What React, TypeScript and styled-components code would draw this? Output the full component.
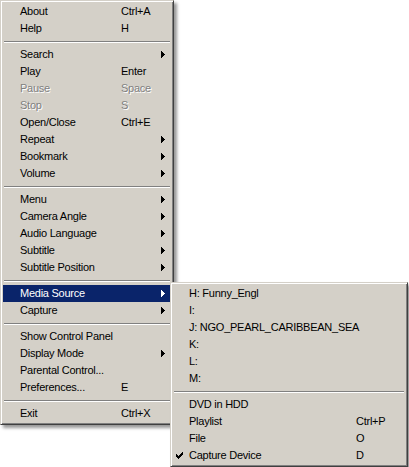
import React from 'react';
import styled, { createGlobalStyle } from 'styled-components';

const Global = createGlobalStyle`
  html, body { margin: 0; padding: 0; background: #fff; }
  body { font-family: "Liberation Sans", Arial, sans-serif; font-size: 11px; }
`;

const Stage = styled.div`
  position: relative;
  width: 409px;
  height: 467px;
  overflow: hidden;
  background: #fff;
`;

const MenuPanel = styled.div<{ $width: number }>`
  box-sizing: border-box;
  width: ${(p) => p.$width}px;
  background: #d4d0c8;
  border: 1px solid;
  border-color: #d4d0c8 #404040 #404040 #d4d0c8;
  padding: 2px;
  color: #000;
  text-shadow: none;
  box-shadow: inset 1px 1px #fff, inset -1px -1px #808080, 3px 3px 3px rgba(0, 0, 0, 0.4);
`;

const SubPanel = styled(MenuPanel)`
  position: absolute;
  left: 167px;
  top: -3px;
  z-index: 2;
`;

const Row = styled.div<{ $cols: string; $hl?: boolean; $disabled?: boolean }>`
  position: relative;
  display: grid;
  grid-template-columns: ${(p) => p.$cols};
  height: 17px;
  line-height: 17px;
  white-space: nowrap;
  letter-spacing: -0.25px;
  background: ${(p) => (p.$hl ? '#0a246a' : 'transparent')};
  color: ${(p) => (p.$hl ? '#fff' : p.$disabled ? '#808080' : '#000')};
  text-shadow: ${(p) => (p.$disabled ? '1px 1px #fff' : 'none')};
`;

const Gutter = styled.span`
  display: flex;
  align-items: center;
  padding-left: 3px;
`;

const Label = styled.span`
  overflow: visible;
`;

const Shortcut = styled.span``;

const ArrowCell = styled.span`
  display: flex;
  align-items: center;
`;

const Separator = styled.div`
  height: 9px;
  display: flex;
  flex-direction: column;
  justify-content: center;
  padding: 0 1px;
  &::before {
    content: '';
    display: block;
    height: 1px;
    background: #808080;
  }
  &::after {
    content: '';
    display: block;
    height: 1px;
    background: #fff;
  }
`;

const Arrow = ({ color }: { color: string }) => (
  <svg width="4" height="7" viewBox="0 0 4 7" shapeRendering="crispEdges">
    <rect x="0" y="0" width="1" height="7" fill={color} />
    <rect x="1" y="1" width="1" height="5" fill={color} />
    <rect x="2" y="2" width="1" height="3" fill={color} />
    <rect x="3" y="3" width="1" height="1" fill={color} />
  </svg>
);

const Check = () => (
  <svg width="7" height="7" viewBox="0 0 7 7" shapeRendering="crispEdges">
    {[2, 3, 4, 3, 2, 1, 0].map((y, x) => (
      <rect key={x} x={x} y={y} width="1" height="3" fill="#000" />
    ))}
  </svg>
);

type Item =
  | { sep: true }
  | { label: string; shortcut?: string; sub?: boolean; disabled?: boolean; hl?: boolean; checked?: boolean };

const mainItems: Item[] = [
  { label: 'About', shortcut: 'Ctrl+A' },
  { label: 'Help', shortcut: 'H' },
  { sep: true },
  { label: 'Search', sub: true },
  { label: 'Play', shortcut: 'Enter' },
  { label: 'Pause', shortcut: 'Space', disabled: true },
  { label: 'Stop', shortcut: 'S', disabled: true },
  { label: 'Open/Close', shortcut: 'Ctrl+E' },
  { label: 'Repeat', sub: true },
  { label: 'Bookmark', sub: true },
  { label: 'Volume', sub: true },
  { sep: true },
  { label: 'Menu', sub: true },
  { label: 'Camera Angle', sub: true },
  { label: 'Audio Language', sub: true },
  { label: 'Subtitle', sub: true },
  { label: 'Subtitle Position', sub: true },
  { sep: true },
  { label: 'Media Source', sub: true, hl: true },
  { label: 'Capture', sub: true },
  { sep: true },
  { label: 'Show Control Panel' },
  { label: 'Display Mode', sub: true },
  { label: 'Parental Control...' },
  { label: 'Preferences...', shortcut: 'E' },
  { sep: true },
  { label: 'Exit', shortcut: 'Ctrl+X' },
];

const subItems: Item[] = [
  { label: 'H: Funny_Engl' },
  { label: 'I:' },
  { label: 'J: NGO_PEARL_CARIBBEAN_SEA' },
  { label: 'K:' },
  { label: 'L:' },
  { label: 'M:' },
  { sep: true },
  { label: 'DVD in HDD' },
  { label: 'Playlist', shortcut: 'Ctrl+P' },
  { label: 'File', shortcut: 'O' },
  { label: 'Capture Device', shortcut: 'D', checked: true },
];

const MAIN_COLS = '17px 101px 40px 10px';
const SUB_COLS = '16px 167px 49px';

const SubMenu = () => (
  <SubPanel $width={238}>
    {subItems.map((it, i) =>
      'sep' in it ? (
        <Separator key={i} />
      ) : (
        <Row key={i} $cols={SUB_COLS}>
          <Gutter>{it.checked ? <Check /> : null}</Gutter>
          <Label>{it.label}</Label>
          <Shortcut>{it.shortcut ?? ''}</Shortcut>
        </Row>
      )
    )}
  </SubPanel>
);

export default function App() {
  return (
    <Stage>
      <Global />
      <MenuPanel $width={174}>
        {mainItems.map((it, i) =>
          'sep' in it ? (
            <Separator key={i} />
          ) : (
            <Row key={i} $cols={MAIN_COLS} $hl={it.hl} $disabled={it.disabled}>
              <Gutter />
              <Label>{it.label}</Label>
              <Shortcut>{it.shortcut ?? ''}</Shortcut>
              <ArrowCell>{it.sub ? <Arrow color={it.hl ? '#fff' : '#000'} /> : null}</ArrowCell>
              {it.hl ? <SubMenu /> : null}
            </Row>
          )
        )}
      </MenuPanel>
    </Stage>
  );
}
